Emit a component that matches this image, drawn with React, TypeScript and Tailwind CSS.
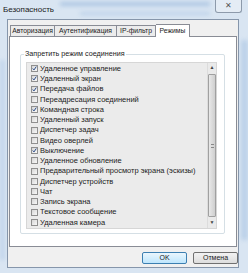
import React from "react";

const items: [string, boolean][] = [
  ["Удаленное управление", true],
  ["Удаленный экран", true],
  ["Передача файлов", true],
  ["Переадресация соединений", false],
  ["Командная строка", true],
  ["Удаленный запуск", false],
  ["Диспетчер задач", false],
  ["Видео оверлей", false],
  ["Выключение", true],
  ["Удаленное обновление", false],
  ["Предварительный просмотр экрана (эскизы)", false],
  ["Диспетчер устройств", false],
  ["Чат", false],
  ["Запись экрана", false],
  ["Текстовое сообщение", false],
  ["Удаленная камера", false],
];

function Check({ checked }: { checked: boolean }) {
  return (
    <div className="w-[7px] h-[7px] border border-[#8f8f8f] bg-gradient-to-br from-[#d6d6d6] to-[#f8f8f8] flex items-center justify-center shrink-0">
      {checked && (
        <svg width="7" height="7" viewBox="0 0 7 7">
          <path d="M1 3.5 L2.8 5.5 L6 0.8" stroke="#2a4c8a" strokeWidth="1.4" fill="none" />
        </svg>
      )}
    </div>
  );
}

export default function App() {
  return (
    <div
      className="w-[248px] h-[273px] relative overflow-hidden bg-[#d9e5f2] text-[#1b1b1b]"
      style={{ fontFamily: '"Liberation Sans", Arial, sans-serif' }}
    >
      <div className="absolute inset-0 opacity-60 pointer-events-none">
        <div className="absolute left-[60px] top-[2px] w-[150px] h-[4px] bg-[#8fb1d8] blur-[2px]" />
        <div className="absolute left-[80px] top-[12px] w-[130px] h-[3px] bg-[#a6c2e2] blur-[2px]" />
        <div className="absolute left-[241px] top-[40px] w-[7px] h-[200px] bg-[#a9c4e3] blur-[2px]" />
        <div className="absolute left-[0px] top-[60px] w-[5px] h-[200px] bg-[#b3cbe7] blur-[2px]" />
      </div>
      <div className="relative flex flex-col h-full">
        <div className="h-[19px] flex items-start justify-between pl-[3px]">
          <div className="text-[8px] mt-[4px] text-[#202020]">Безопасность</div>
          <div className="w-[27px] h-[13px] mr-[6px] border border-t-0 border-[#8d9aab] rounded-b-[3px] bg-[#e4ecf5] flex items-center justify-center">
            <span className="text-[8px] leading-none text-[#555]">✕</span>
          </div>
        </div>
        <div className="ml-[7px] mr-[9px] mb-[5px] flex-1 bg-[#f0f0f0] border border-[#8696ab] flex flex-col">
          <div className="flex items-end pl-[2px] pt-[3px] h-[16px]">
            <div className="w-[45px] h-[11px] border border-b-0 border-[#898c95] bg-[#ececec] text-[6.8px] leading-[10px] text-center whitespace-nowrap">Авторизация</div>
            <div className="w-[62px] h-[11px] border border-b-0 border-l-0 border-[#898c95] bg-[#ececec] text-[6.8px] leading-[10px] text-center whitespace-nowrap">Аутентификация</div>
            <div className="w-[39px] h-[11px] border border-b-0 border-l-0 border-[#898c95] bg-[#ececec] text-[6.8px] leading-[10px] text-center whitespace-nowrap">IP-фильтр</div>
            <div className="w-[34px] h-[13px] border border-b-0 border-l-0 border-[#898c95] bg-white text-[6.8px] leading-[12px] text-center whitespace-nowrap -mb-px relative">Режимы</div>
          </div>
          <div className="mx-[1px] h-[211px] bg-white border border-[#898c95] pl-[10px] pr-[11px] pt-[17px]">
            <div className="relative border border-[#d5dfe5] rounded-[2px] h-[180px] pt-[7px] pl-[5px] pr-[7px]">
              <div className="absolute left-[3px] -top-[6px] bg-white px-[1px] text-[7.2px] leading-[10px]">Запретить режим соединения</div>
              <div className="flex h-[167px] bg-[#ebebeb] border border-[#d6d6d6]">
                <div className="flex-1 pl-[4px] pt-[0.5px] flex flex-col">
                  {items.map(([t, c]) => (
                    <div key={t} className="h-[10.25px] flex items-center gap-[2px]">
                      <Check checked={c} />
                      <span className="text-[7.5px] whitespace-nowrap leading-none">{t}</span>
                    </div>
                  ))}
                </div>
                <div className="w-[9px] bg-[#eaeaea] border-l border-[#dcdcdc] flex flex-col items-center">
                  <div className="h-[10px] flex items-center justify-center text-[5px] text-[#444]">▲</div>
                  <div className="w-[8px] flex-1 my-[1px] bg-gradient-to-r from-[#e8e8e8] to-[#cfcfcf] border border-[#a0a0a0] rounded-[1px] flex items-center justify-center">
                    <div className="w-[3px] h-[4px] border-y border-[#888]" />
                  </div>
                  <div className="h-[10px] flex items-center justify-center text-[5px] text-[#444]">▼</div>
                </div>
              </div>
            </div>
          </div>
          <div className="flex justify-end gap-[6px] pr-[0px] pt-[5px]">
            <div className="w-[45px] h-[12px] border border-[#3c7fb1] rounded-[2px] bg-gradient-to-b from-[#eaf6fd] to-[#bee6fd] text-[7px] leading-[10px] text-center">OK</div>
            <div className="w-[45px] h-[12px] border border-[#707070] rounded-[2px] bg-gradient-to-b from-[#f2f2f2] to-[#dddddd] text-[7px] leading-[10px] text-center">Отмена</div>
          </div>
        </div>
      </div>
    </div>
  );
}
